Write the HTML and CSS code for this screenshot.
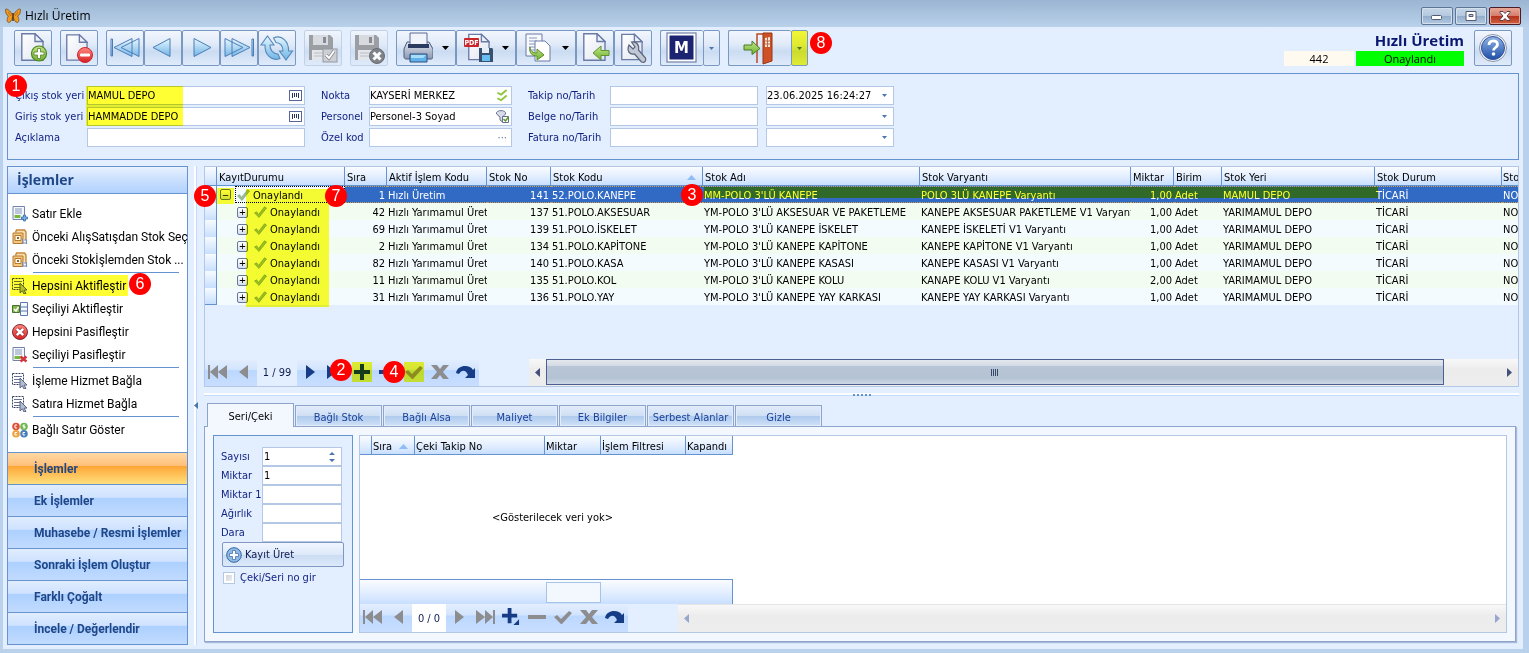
FILE: index.html
```html
<!DOCTYPE html>
<html lang="tr">
<head>
<meta charset="utf-8">
<title>Hızlı Üretim</title>
<link rel="stylesheet" href="styles.css">
</head>
<body>
<svg class="defs" aria-hidden="true">
  <defs>
    <linearGradient id="gBlue" x1="0" y1="0" x2="0" y2="1"><stop offset="0" stop-color="#e9f7fe"/><stop offset="1" stop-color="#6db4e6"/></linearGradient>
    <linearGradient id="gPage" x1="0" y1="0" x2="1" y2="1"><stop offset="0" stop-color="#ffffff"/><stop offset="1" stop-color="#dfe5f0"/></linearGradient>
    <linearGradient id="gGreen" x1="0" y1="0" x2="0" y2="1"><stop offset="0" stop-color="#c3e68c"/><stop offset="1" stop-color="#6fb02c"/></linearGradient>
    <linearGradient id="gRed" x1="0" y1="0" x2="0" y2="1"><stop offset="0" stop-color="#ff8a80"/><stop offset="1" stop-color="#d81e22"/></linearGradient>
    <linearGradient id="gHelp" x1="0" y1="0" x2="0" y2="1"><stop offset="0" stop-color="#8fb4e4"/><stop offset="1" stop-color="#1e4fa8"/></linearGradient>
    <linearGradient id="gSteel" x1="0" y1="0" x2="0" y2="1"><stop offset="0" stop-color="#dfe4ee"/><stop offset="1" stop-color="#8c98b0"/></linearGradient>
  </defs>
  <symbol id="page" viewBox="0 0 23 28"><path d="M.8 .8H14L22 8.500V27.200H.8Z" fill="url(#gPage)" stroke="#6a7ba8" stroke-width="1.400"/><path d="M14 .8V8.500H22Z" fill="#eef2f9" stroke="#6a7ba8" stroke-width="1.400"/></symbol>
  <symbol id="floppy" viewBox="0 0 24 25"><path d="M0 0H21L24 3V25H0Z" fill="#8f9194"/><path d="M4 0H19V10H4Z" fill="#d5d7da"/><path d="M14 2H17V8H14Z" fill="#77797d"/><path d="M3 15H21V25H3Z" fill="#e4e5e7"/><path d="M5 18H19M5 21H19" stroke="#b4b6b9"/></symbol>
  <symbol id="first" viewBox="0 0 20 16"><path d="M0 1h2v14H0zM10 1v14L2 8zM19 1v14L10 8z"/></symbol>
  <symbol id="last" viewBox="0 0 20 16"><path d="M18 1h2v14h-2zM10 1v14L18 8zM1 1v14L10 8z"/></symbol>
  <symbol id="prev" viewBox="0 0 10 16"><path d="M9 1v14L0 8z"/></symbol>
  <symbol id="next" viewBox="0 0 10 16"><path d="M1 1v14L10 8z"/></symbol>
  <symbol id="plus" viewBox="0 0 18 18"><path d="M7 1h4v6h6v4h-6v6H7v-6H1V7h6z"/></symbol>
  <symbol id="plusmenu" viewBox="0 0 19 19"><path d="M6 0h4v6h6v4h-6v6H6v-6H0V6h6zM18 12v6h-6z"/></symbol>
  <symbol id="minus" viewBox="0 0 18 18"><path d="M0 7h18v4H0z"/></symbol>
  <symbol id="tick" viewBox="0 0 18 18"><path d="M0 9l3-2 4 4L15 3l3 2L8 16H7z"/></symbol>
  <symbol id="cross" viewBox="0 0 18 18"><path d="M0 2h6l3 4 3-4h6l-6 7 6 7h-6l-3-4-3 4H0l6-7z"/></symbol>
  <symbol id="redo" viewBox="0 0 20 16"><path d="M0 9C1 4 5 2 9 2c4 0 6 1 8 4l2-2v10H9l3-3C10 6 6 5 3 10z"/></symbol>
  <symbol id="down" viewBox="0 0 7 4"><path d="M0 0h7L3.500 4z"/></symbol>
  <symbol id="rowtick" viewBox="0 0 13 12"><path d="M.6 7l2-1.200L4.600 8.500 10.500.8 12.500 2 5 11.400z" fill="#9cbf92" stroke="#7fa67c" stroke-width=".8"/></symbol>
  <symbol id="barcode" viewBox="0 0 13 11"><rect x=".5" y=".5" width="12" height="10" fill="#fff" stroke="#56659c"/><path d="M3.500 3v5M5.500 3v4M7.500 3v4M9.500 3v5" stroke="#26325e"/></symbol>
  <symbol id="select" viewBox="0 0 16 16"><path d="M.5 .5h11v11H.5z" fill="none" stroke="#333e66" stroke-dasharray="2 1"/><path d="M2 3.500h8M2 6.500h6M2 9.500h6" stroke="#687394"/><path d="M8 5l7 7-3 .2 2 3.200-2 .6-1.600-3.200L8 15z" fill="#b4bdd2" stroke="#4f5a78" stroke-width=".9"/></symbol>
  <symbol id="list" viewBox="0 0 16 16"><path d="M1 .5h11.500v13H1z" fill="#f4f7fc" stroke="#7383ab"/><path d="M3 3h7M3 5h7M3 7h7" stroke="#8796b8"/><path d="M2.500 9h6v3h-6z" fill="#78b83d"/></symbol>
  <symbol id="box" viewBox="0 0 16 16"><path d="M3.500 3.500l1-2.500h8l1.500 2v8" fill="#f8dfae" stroke="#c48a3c" stroke-width="1.400"/><path d="M1 4h10v10.500H1z" fill="#f3c77d" stroke="#b67a35"/><path d="M3 6.500h6v5H3z" fill="#fff7e5" stroke="#b67a35"/><path d="M5 8h2v2H5z" fill="#8a6536"/><path d="M10.500 9.500v4.500h4M12 11h2.500v4" fill="none" stroke="#7d8eae" stroke-width="1.200"/></symbol>
</svg>

<header class="titlebar">
  <svg class="ico16" viewBox="0 0 16 16"><path d="M7.500 7C5 2 1 0 .5 1.500c0 3 1 6 3 6.500C2 9.500 1.500 14 3.500 14.500 6 14.500 7 11 8 9c1 2 2 5.500 4.500 5.500C14.500 14 14 9.500 12.500 8c2-.5 3-3.500 3-6.500C15 0 11 2 8.500 7z" fill="#f09a24" stroke="#7a4c14" stroke-width=".8"/><path d="M8 5v8" stroke="#4c3010" stroke-width="1.400"/><path d="M3 4l3 4M13 4l-3 4" stroke="#b8640f" stroke-width=".8"/></svg>
  <h1>Hızlı Üretim</h1>
  <div class="winbtns">
    <button aria-label="Küçült"><svg viewBox="0 0 12 10"><rect x=".5" y="4.500" width="10" height="4" rx="1" fill="#fff" stroke="#555b6e"/></svg></button>
    <button aria-label="Büyüt"><svg viewBox="0 0 12 10"><path fill-rule="evenodd" d="M1 .5h10v9H1zM4 3.500v2h4v-2z" fill="#fff" stroke="#555b6e"/></svg></button>
    <button class="close" aria-label="Kapat"><svg viewBox="0 0 12 10"><path d="M1 .5h3l2 2 2-2h3v1L8 5l3 3.500v1H8l-2-2-2 2H1v-1L4 5 1 1.500z" fill="#fff" stroke="#5b3c46"/></svg></button>
  </div>
</header>

<div class="client">
  <div class="toolbar">
    <button class="tb" aria-label="Yeni"><svg viewBox="1 1 36 34"><use href="#page" x="7" y="3" width="23" height="28"/><circle cx="25" cy="23.500" r="7.500" fill="url(#gGreen)" stroke="#4c8420" stroke-width="1.200"/><path d="M23.500 18.500h3v3.500h3.500v3h-3.500v3.500h-3V25H20v-3h3.500z" fill="#fff" stroke="#58812f" stroke-width=".8"/></svg></button>
    <button class="tb" aria-label="Sil"><svg viewBox="1 1 36 34"><use href="#page" x="6" y="4" width="22" height="27"/><circle cx="25" cy="25" r="7.500" fill="url(#gRed)" stroke="#c9262c" stroke-width="1"/><rect x="20" y="23.500" width="10" height="3" rx="1" fill="#fff"/></svg></button>
    <div class="group">
      <button class="tb" aria-label="İlk"><svg viewBox="1 1 36 34"><path d="M5 9h1.500v17H5zM26 8.500v18L8 17.500zM33 8.500v18L15 17.500z" fill="url(#gBlue)" fill-opacity=".9" stroke="#4a7cb8"/></svg></button>
      <button class="tb" aria-label="Önceki"><svg viewBox="1 1 36 34"><path d="M26 8.500v18L9 17.500z" fill="url(#gBlue)" stroke="#4a7cb8"/></svg></button>
      <button class="tb" aria-label="Sonraki"><svg viewBox="1 1 36 34"><path d="M12 8.500v18L29 17.500z" fill="url(#gBlue)" stroke="#4a7cb8"/></svg></button>
      <button class="tb" aria-label="Son"><svg viewBox="1 1 36 34"><path d="M32 9h1.500v17H32zM5 8.500v18L23 17.500zM12 8.500v18L30 17.500z" fill="url(#gBlue)" fill-opacity=".9" stroke="#4a7cb8"/></svg></button>
      <button class="tb" aria-label="Yenile"><svg viewBox="1 1 36 34"><path d="M9.500 6l6.500 9h-4c0 5 3 9 8 9l2 4.500C13 32 6.500 24 7 15H3zM28 30l-6.500-9H25c0-5-3-8-7-8.500L15.500 8C24 4 31 12 30.500 21H34.500z" fill="url(#gBlue)" stroke="#5588bb" stroke-width="1.100"/></svg></button>
    </div>
    <button class="tb off" disabled aria-label="Kaydet"><svg viewBox="1 1 36 34"><use href="#floppy" x="5" y="5" width="24" height="25"/><rect x="19" y="19" width="14" height="13" fill="#c9cbcf" stroke="#888b91"/><path d="M22 25l3 3 5-7" fill="none" stroke="#777" stroke-width="3.500"/><path d="M22 25l3 3 5-7" fill="none" stroke="#fff" stroke-width="2"/></svg></button>
    <button class="tb off" disabled aria-label="Vazgeç"><svg viewBox="1 1 36 34"><use href="#floppy" x="5" y="5" width="24" height="25"/><circle cx="27" cy="26" r="7.500" fill="#6e7074" stroke="#55575b"/><path d="M23.500 22.500l7 7M30.500 22.500l-7 7" stroke="#fff" stroke-width="3"/></svg></button>
    <div class="group">
      <button class="tb wide" aria-label="Yazdır"><svg viewBox="1 1 36 34"><path d="M11 12h22l4 7v8c0 1-1 2-2 2H10c-1 0-2-1-2-2v-8z" fill="url(#gSteel)" stroke="#4a5b86"/><path d="M14 3h17v12H14z" fill="#f0f3f9" stroke="#5b6b96"/><path d="M12 14h21v4H12z" fill="#2b3a60"/><path d="M14 24h17v8H14z" fill="#62b2ea" stroke="#2f4d80"/><path d="M15 25h15l-3 3H15z" fill="#a9dcf8"/></svg><svg class="arr"><use href="#down"/></svg></button>
      <button class="tb wide" aria-label="PDF kaydet"><svg viewBox="1 1 36 34"><use href="#page" x="12" y="3" width="22" height="28"/><rect x="8" y="8" width="15" height="9" rx="1" fill="#c9262c"/><text x="15.500" y="15" class="pdf">PDF</text><path d="M23 18h13l1 1v13H23z" fill="#39506f"/><path d="M26 18h7v5h-7z" fill="#e5edf6"/><path d="M26 25h8v6h-8z" fill="#66bff0"/></svg><svg class="arr"><use href="#down"/></svg></button>
      <button class="tb wide" aria-label="Kopyala"><svg viewBox="1 1 36 34"><path d="M10 4h16v22H10z" fill="#f7f9fd" stroke="#6a7ba8"/><path d="M13 8h8M13 11h8M13 14h8M13 17h8M13 20h8" stroke="#8a97bb"/><path d="M19 11h10l5 5v15H19z" fill="#fff" stroke="#6a7ba8"/><path d="M14 17c0 4 3 6 7 6v-4l7 6-7 5v-4c-5 0-8-3-7-9z" fill="url(#gGreen)" stroke="#5a8f24"/></svg><svg class="arr"><use href="#down"/></svg></button>
      <button class="tb" aria-label="İçe aktar"><svg viewBox="1 1 36 34"><use href="#page" x="7" y="3" width="23" height="28"/><path d="M17 23l8-7v4.500h8v5h-8V30z" fill="url(#gGreen)" stroke="#5f9430"/></svg></button>
      <button class="tb" aria-label="Ayarlar"><svg viewBox="1 1 36 34"><use href="#page" x="7" y="3" width="22" height="28"/><path d="M15 15l4 4 2-2-3.500-5c5-1 8 3 7 8l7 8c1 3-1 5-4 4l-7-8c-5 1-8-3-5.500-9z" fill="#c1c7d3" stroke="#58637c" stroke-width="1.200"/></svg></button>
    </div>
    <div class="group">
      <button class="tb m" aria-label="Mikro"><svg viewBox="1 1 36 34"><rect x="4" y="3" width="29" height="29" fill="#fff" stroke="#7180a8" stroke-width="1.200"/><rect x="6.500" y="5.500" width="24" height="24" fill="#1c2472"/><text x="18.500" y="23" class="mlogo">M</text></svg></button>
      <button class="tb drop" aria-label="Mikro seçenekleri"><svg class="arr"><use href="#down"/></svg></button>
    </div>
    <div class="group">
      <button class="tb exit" aria-label="Çıkış"><svg viewBox="1 1 36 34"><path d="M16 33V4h6" fill="none" stroke="#bb4a28" stroke-width="1.500"/><path d="M22 3h9v28l-9 3z" fill="#cf5227" stroke="#983515"/><path d="M24 8l5-1v10h-5z" fill="#f7e8d8"/><path d="M24 11h5M24 14h5M26.500 7v10" stroke="#b66a45"/><path d="M3 15h8v-4l8 7.500-8 6V20H3z" fill="url(#gGreen)" stroke="#477c23"/></svg></button>
      <button class="tb drop" aria-label="Çıkış seçenekleri"><svg class="arr"><use href="#down"/></svg><span class="mark all"></span></button>
    </div>
    <span class="badge static">8</span>
    <div class="status">
      <strong>Hızlı Üretim</strong>
      <span class="no">442</span><span class="ok">Onaylandı</span>
    </div>
    <button class="tb help" aria-label="Yardım"><svg viewBox="1 1 36 34"><circle cx="19" cy="18" r="13.500" fill="#f3f6fb" stroke="#8a94ae"/><circle cx="19" cy="18" r="11.500" fill="url(#gHelp)" stroke="#34549a"/><path d="M15 15c0-5.500 8.500-5.500 8.500-.5 0 3-4 3-4 6" fill="none" stroke="#fff" stroke-width="2.800"/><circle cx="19.500" cy="24" r="1.800" fill="#fff"/></svg></button>
  </div>

  <section class="docform">
    <div class="fields f1">
      <label for="cikis">Çıkış stok yeri</label><div class="inp"><input id="cikis" value="MAMUL DEPO"><svg class="i13"><use href="#barcode"/></svg></div>
      <label for="giris">Giriş stok yeri</label><div class="inp"><input id="giris" value="HAMMADDE DEPO"><svg class="i13"><use href="#barcode"/></svg></div>
      <label for="acik">Açıklama</label><div class="inp"><input id="acik"></div>
      <span class="mark stores"></span>
    </div>
    <div class="fields f2">
      <label for="nokta">Nokta</label><div class="inp"><input id="nokta" value="KAYSERİ MERKEZ"><svg class="i13" viewBox="0 0 13 14"><path d="M1 4l4 2 6-5M1 10l4 2 6-5" fill="none" stroke="#8fc63e" stroke-width="2"/></svg></div>
      <label for="pers">Personel</label><div class="inp"><input id="pers" value="Personel-3 Soyad"><svg class="i13" viewBox="0 0 13 13"><path d="M.5 2.500C2 0 8 0 9.500 2.500V4L6.500 7v5L4 10V7L.5 4z" fill="#d7dce8" stroke="#65708e"/><path d="M6.500 6.500h6v6h-6z" fill="#fff" stroke="#65708e"/><path d="M7.500 9l2 2 3-4" fill="none" stroke="#559a25" stroke-width="1.400"/></svg></div>
      <label for="ozel">Özel kod</label><div class="inp"><input id="ozel"><span class="dots">···</span></div>
    </div>
    <div class="fields f3">
      <label for="takip">Takip no/Tarih</label><div class="inp"><input id="takip"></div><div class="inp"><select aria-label="Takip tarihi"><option>23.06.2025 16:24:27</option></select><svg class="arr"><use href="#down"/></svg></div>
      <label for="belge">Belge no/Tarih</label><div class="inp"><input id="belge"></div><div class="inp"><select aria-label="Belge tarihi"><option></option></select><svg class="arr"><use href="#down"/></svg></div>
      <label for="fatura">Fatura no/Tarih</label><div class="inp"><input id="fatura"></div><div class="inp"><select aria-label="Fatura tarihi"><option></option></select><svg class="arr"><use href="#down"/></svg></div>
    </div>
    <span class="badge b1">1</span>
  </section>

  <div class="main">
    <aside class="sidebar">
      <h2>İşlemler</h2>
      <div class="acts">
        <button><svg class="ico16" viewBox="0 0 16 16"><use href="#list"/><path d="M9.500 9.500h2v-2h2v2h2v2h-2v2h-2v-2h-2z" fill="#78b0e4" stroke="#3569a8" stroke-width=".8" transform="translate(0 1.500)"/></svg>Satır Ekle</button>
        <button><svg class="ico16"><use href="#box"/></svg>Önceki AlışSatışdan Stok Seç</button>
        <button><svg class="ico16"><use href="#box"/></svg>Önceki Stokİşlemden Stok ...</button>
        <hr>
        <button><svg class="ico16"><use href="#select"/></svg>Hepsini Aktifleştir<span class="mark act"></span><span class="badge b6">6</span></button>
        <button><svg class="ico16" viewBox="0 0 16 16"><path d="M8.500 1.500h7v13h-7zM8.500 6h7M8.500 10h7" fill="#f4f8ff" stroke="#6079ad"/><path d="M.5 4.500h7v7h-7z" fill="#86b94c" stroke="#4a7030"/><path d="M2 8l2 2 2.500-4" fill="none" stroke="#fff" stroke-width="1.500"/></svg>Seçiliyi Aktifleştir</button>
        <button><svg class="ico16" viewBox="0 0 16 16"><circle cx="8" cy="8" r="7.500" fill="url(#gRed)" stroke="#7d2a33"/><path d="M4.800 4.800l6.400 6.400M11.200 4.800l-6.400 6.400" stroke="#8d2c35" stroke-width="4"/><path d="M4.800 4.800l6.400 6.400M11.200 4.800l-6.400 6.400" stroke="#fff" stroke-width="2.600"/></svg>Hepsini Pasifleştir</button>
        <button><svg class="ico16" viewBox="0 0 16 16"><use href="#list"/><path d="M8.500 9.500l6 5M14.500 9.500l-6 5" stroke="#d3353a" stroke-width="2.500"/></svg>Seçiliyi Pasifleştir</button>
        <hr>
        <button><svg class="ico16"><use href="#select"/></svg>İşleme Hizmet Bağla</button>
        <button><svg class="ico16"><use href="#select"/></svg>Satıra Hizmet Bağla</button>
        <hr>
        <button><svg class="ico16" viewBox="0 0 16 16"><circle cx="4" cy="4.500" r="3.800" fill="#df5238"/><circle cx="12" cy="4.500" r="3.800" fill="#71b850"/><circle cx="4" cy="11.800" r="3.800" fill="#eda33f"/><circle cx="12" cy="11.800" r="3.800" fill="#4b80bd"/><path d="M5 3H3v3h2M13 3h-2v1.500h2V6h-2M5 10.500H3v2.500h2M13 10.500h-2v2.500h2" fill="none" stroke="#fff"/></svg>Bağlı Satır Göster</button>
      </div>
      <nav>
        <button class="on">İşlemler</button>
        <button>Ek İşlemler</button>
        <button>Muhasebe / Resmi İşlemler</button>
        <button>Sonraki İşlem Oluştur</button>
        <button>Farklı Çoğalt</button>
        <button>İncele / Değerlendir</button>
      </nav>
    </aside>
    <div class="vsplit"><svg viewBox="0 0 4 7"><path d="M4 0v7L0 3.500z"/></svg></div>

    <div class="right">
      <section class="grid">
        <div class="clip">
        <table>
          <colgroup><col class="c12"><col class="c128"><col class="c42"><col class="c100"><col class="c64"><col class="c152"><col class="c217"><col class="c211"><col class="c43"><col class="c48"><col class="c153"><col class="c127"><col></colgroup>
          <thead><tr><th></th><th>KayıtDurumu</th><th>Sıra</th><th>Aktif İşlem Kodu</th><th>Stok No</th><th><span class="sort">Stok Kodu<svg viewBox="0 0 9 5"><path d="M0 5h9L4.500 0z"/></svg></span></th><th>Stok Adı</th><th>Stok Varyantı</th><th>Miktar</th><th>Birim</th><th>Stok Yeri</th><th>Stok Durum</th><th>Sto</th></tr></thead>
          <tbody>
          <tr class="sel"><td></td><td><span class="node"><button class="ex" aria-label="Daralt">−</button><span class="foc"><svg class="rt"><use href="#rowtick"/></svg>Onaylandı</span></span></td><td class="n">1</td><td>Hızlı Üretim</td><td class="n">141</td><td>52.POLO.KANEPE</td><td>MM-POLO 3'LÜ KANEPE</td><td>POLO 3LÜ KANEPE Varyantı</td><td class="n">1,00</td><td>Adet</td><td>MAMUL DEPO</td><td>TİCARİ</td><td>NO</td></tr>
          <tr><td></td><td><span class="node kid"><button class="ex" aria-label="Genişlet">+</button><svg class="rt"><use href="#rowtick"/></svg>Onaylandı</span></td><td class="n">42</td><td>Hızlı Yarımamul Üretim</td><td class="n">137</td><td>51.POLO.AKSESUAR</td><td>YM-POLO 3'LÜ AKSESUAR VE PAKETLEME</td><td>KANEPE AKSESUAR PAKETLEME V1 Varyant</td><td class="n">1,00</td><td>Adet</td><td>YARIMAMUL DEPO</td><td>TİCARİ</td><td>NO</td></tr>
          <tr><td></td><td><span class="node kid"><button class="ex" aria-label="Genişlet">+</button><svg class="rt"><use href="#rowtick"/></svg>Onaylandı</span></td><td class="n">69</td><td>Hızlı Yarımamul Üretim</td><td class="n">139</td><td>51.POLO.İSKELET</td><td>YM-POLO 3'LÜ KANEPE İSKELET</td><td>KANEPE İSKELETİ V1 Varyantı</td><td class="n">1,00</td><td>Adet</td><td>YARIMAMUL DEPO</td><td>TİCARİ</td><td>NO</td></tr>
          <tr><td></td><td><span class="node kid"><button class="ex" aria-label="Genişlet">+</button><svg class="rt"><use href="#rowtick"/></svg>Onaylandı</span></td><td class="n">2</td><td>Hızlı Yarımamul Üretim</td><td class="n">134</td><td>51.POLO.KAPİTONE</td><td>YM-POLO 3'LÜ KANEPE KAPİTONE</td><td>KANEPE KAPİTONE V1 Varyantı</td><td class="n">1,00</td><td>Adet</td><td>YARIMAMUL DEPO</td><td>TİCARİ</td><td>NO</td></tr>
          <tr><td></td><td><span class="node kid"><button class="ex" aria-label="Genişlet">+</button><svg class="rt"><use href="#rowtick"/></svg>Onaylandı</span></td><td class="n">82</td><td>Hızlı Yarımamul Üretim</td><td class="n">140</td><td>51.POLO.KASA</td><td>YM-POLO 3'LÜ KANEPE KASASI</td><td>KANEPE KASASI V1 Varyantı</td><td class="n">1,00</td><td>Adet</td><td>YARIMAMUL DEPO</td><td>TİCARİ</td><td>NO</td></tr>
          <tr><td></td><td><span class="node kid"><button class="ex" aria-label="Genişlet">+</button><svg class="rt"><use href="#rowtick"/></svg>Onaylandı</span></td><td class="n">11</td><td>Hızlı Yarımamul Üretim</td><td class="n">135</td><td>51.POLO.KOL</td><td>YM-POLO 3'LÜ KANEPE KOLU</td><td>KANAPE KOLU V1 Varyantı</td><td class="n">2,00</td><td>Adet</td><td>YARIMAMUL DEPO</td><td>TİCARİ</td><td>NO</td></tr>
          <tr><td></td><td><span class="node kid"><button class="ex" aria-label="Genişlet">+</button><svg class="rt"><use href="#rowtick"/></svg>Onaylandı</span></td><td class="n">31</td><td>Hızlı Yarımamul Üretim</td><td class="n">136</td><td>51.POLO.YAY</td><td>YM-POLO 3'LÜ KANEPE YAY KARKASI</td><td>KANEPE YAY KARKASI Varyantı</td><td class="n">1,00</td><td>Adet</td><td>YARIMAMUL DEPO</td><td>TİCARİ</td><td>NO</td></tr>
          </tbody>
        </table>
        </div>
        <span class="mark kids"></span><span class="mark expander"></span><span class="mark rowmark"></span>
        <span class="badge b5">5</span><span class="badge b7">7</span><span class="badge b3">3</span>
        <div class="foot">
          <div class="navi">
            <button class="dim" aria-label="İlk kayıt"><svg class="w20"><use href="#first"/></svg></button>
            <button class="dim" aria-label="Önceki kayıt"><svg class="w10"><use href="#prev"/></svg></button>
            <span class="pos">1 / 99</span>
            <button aria-label="Sonraki kayıt"><svg class="w10"><use href="#next"/></svg></button>
            <button aria-label="Son kayıt"><svg class="w20"><use href="#last"/></svg></button>
            <button aria-label="Ekle"><svg class="w18"><use href="#plus"/></svg><span class="mark tool"></span><span class="badge b2">2</span></button>
            <button aria-label="Çıkar"><svg class="w18"><use href="#minus"/></svg></button>
            <button class="dim" aria-label="Onayla"><svg class="w18"><use href="#tick"/></svg><span class="mark tool"></span><span class="badge b4">4</span></button>
            <button class="dim" aria-label="İptal"><svg class="w18"><use href="#cross"/></svg></button>
            <button aria-label="Yenile"><svg class="w20"><use href="#redo"/></svg></button>
          </div>
          <div class="scroll">
            <button aria-label="Sola kaydır"><svg class="w5" viewBox="0 0 5 9"><path d="M5 0v9L0 4.500z"/></svg></button>
            <div class="track"><div class="thumb"><i></i><i></i><i></i><i></i></div></div>
            <button aria-label="Sağa kaydır"><svg class="w5" viewBox="0 0 5 9"><path d="M0 0v9L5 4.500z"/></svg></button>
          </div>
        </div>
      </section>
      <div class="hsplit"><i></i><i></i><i></i><i></i><i></i></div>

      <div class="tabs">
        <button class="on">Seri/Çeki</button><button>Bağlı Stok</button><button>Bağlı Alsa</button><button>Maliyet</button><button>Ek Bilgiler</button><button>Serbest Alanlar</button><button>Gizle</button>
      </div>
      <section class="tabpanel">
        <form class="serial">
          <div class="pairs">
            <label for="sayisi">Sayısı</label><div class="inp"><input id="sayisi" value="1"><svg class="spin" viewBox="0 0 6 10"><path d="M0 3h6L3 0zM0 7h6L3 10z"/></svg></div>
            <label for="mik">Miktar</label><div class="inp"><input id="mik" value="1"></div>
            <label for="mik1">Miktar 1</label><div class="inp"><input id="mik1"></div>
            <label for="agir">Ağırlık</label><div class="inp"><input id="agir"></div>
            <label for="dara">Dara</label><div class="inp"><input id="dara"></div>
          </div>
          <button type="button" class="make"><svg class="ico16" viewBox="0 0 16 16"><circle cx="8" cy="8" r="7.300" fill="#8fbbe6" stroke="#34669f"/><path d="M6.500 3.500h3v3h3v3h-3v3h-3v-3h-3v-3h3z" fill="#fff" stroke="#4274ab" stroke-width=".8"/></svg>Kayıt Üret</button>
          <label class="chk"><input type="checkbox">Çeki/Seri no gir</label>
        </form>
        <div class="subgrid">
          <div class="subbody">
            <table>
              <colgroup><col class="c12"><col class="c43"><col class="c130"><col class="c56"><col class="c85"><col class="c47"></colgroup>
              <thead><tr><th></th><th><span class="sort">Sıra<svg viewBox="0 0 9 5"><path d="M0 5h9L4.500 0z"/></svg></span></th><th>Çeki Takip No</th><th>Miktar</th><th>İşlem Filtresi</th><th>Kapandı</th></tr></thead>
            </table>
            <div class="empty">&lt;Gösterilecek veri yok&gt;</div>
            <div class="sum"><span></span></div>
          </div>
          <div class="foot">
            <div class="navi">
              <button class="dim" aria-label="İlk"><svg class="w20"><use href="#first"/></svg></button>
              <button class="dim" aria-label="Önceki"><svg class="w10"><use href="#prev"/></svg></button>
              <span class="pos">0 / 0</span>
              <button class="dim" aria-label="Sonraki"><svg class="w10"><use href="#next"/></svg></button>
              <button class="dim" aria-label="Son"><svg class="w20"><use href="#last"/></svg></button>
              <button aria-label="Ekle"><svg class="w18"><use href="#plusmenu"/></svg></button>
              <button class="dim" aria-label="Çıkar"><svg class="w18"><use href="#minus"/></svg></button>
              <button class="dim" aria-label="Onayla"><svg class="w18"><use href="#tick"/></svg></button>
              <button class="dim" aria-label="İptal"><svg class="w18"><use href="#cross"/></svg></button>
              <button aria-label="Yenile"><svg class="w20"><use href="#redo"/></svg></button>
            </div>
            <div class="scroll idle">
              <button aria-label="Sola"><svg class="w5" viewBox="0 0 5 9"><path d="M5 0v9L0 4.500z"/></svg></button>
              <div class="track"></div>
              <button aria-label="Sağa"><svg class="w5" viewBox="0 0 5 9"><path d="M0 0v9L5 4.500z"/></svg></button>
            </div>
          </div>
        </div>
      </section>
    </div>
  </div>
</div>
</body>
</html>
```
FILE: styles.css
```css
:root {
  --ui: "DejaVu Sans Condensed", "DejaVu Sans", sans-serif;
  --segoe: "Open Sans", "Noto Sans", sans-serif;
  --side: Roboto, "Noto Sans", sans-serif;
  --line: #6593cf;
  --soft: #b4c8e6;
  --bg: #e3eefe;
  --navy: #0f1f80;
}
* { box-sizing: border-box; }
body {
  margin: 0;
  min-height: 100vh;
  display: flex;
  flex-direction: column;
  padding: 0 6px 4px 3px;
  background: linear-gradient(#9bb5d2, #b9d1ea 27px, #b9d1ea);
  font: 11px/13px var(--ui);
  color: #000;
  overflow: hidden;
}
button, input, select { font: inherit; color: inherit; margin: 0; padding: 0; border: 0; border-radius: 0; background: none; outline: 0; }
h1, h2 { margin: 0; font-weight: 400; }
svg { display: block; flex: none; }
.defs { position: absolute; width: 0; height: 0; }
.ico16 { width: 16px; height: 16px; }
.arr { width: 7px; height: 4px; }
.w20 { width: 20px; height: 16px; }
.w18 { width: 18px; height: 18px; }
.w10 { width: 10px; height: 16px; }
.w5 { width: 5px; height: 9px; }

/* title bar */
.titlebar { height: 27px; display: flex; align-items: center; padding: 4px 2px 0 2px; gap: 4px; }
.titlebar h1 { font: 12px/16px var(--segoe); flex: 1; }
.winbtns { display: flex; gap: 2px; }
.winbtns button { width: 32px; height: 18px; display: grid; place-items: center; border: 1px solid #5f7594; border-radius: 2px; background: linear-gradient(#c6d6e8, #b3c8df 50%, #92acca 50%, #b2c9e2); box-shadow: inset 0 0 0 1px #d3e1ef; }
.winbtns svg { width: 12px; height: 10px; }
.winbtns .close { border-color: #4b1b28; background: linear-gradient(#e8a798, #d47c6b 50%, #b5301b 50%, #d0603f); box-shadow: inset 0 0 0 1px #e4a595; }

.client { flex: 1; display: flex; flex-direction: column; background: var(--bg); padding: 0 4px 4px; }

/* toolbar */
.toolbar { display: flex; align-items: flex-start; gap: 8px; padding: 3px 7px 7px; }
.group { display: flex; }
.tb { position: relative; width: 38px; height: 36px; display: flex; align-items: center; border: 1px solid #7a99c2; border-radius: 2px; background: linear-gradient(#f2f6fd, #e0eaf8 40%, #cbdcf2 60%, #dfebfa); }
.tb > svg:first-child:not(.arr) { width: 36px; height: 34px; }
.tb.wide { width: 60px; }
.tb .arr { margin-left: 9px; fill: #000; }
.tb.off { border-color: #bccce2; opacity: .85; }
.tb.m { width: 43px; padding-left: 3px; border-right: 0; }
.tb.drop { width: 17px; justify-content: center; }
.tb.drop .arr { margin: 0; width: 5px; height: 3px; fill: #4a76b0; }
.tb.exit { width: 63px; padding-left: 13px; border-right: 0; }
.pdf { font: bold 7px "DejaVu Sans Condensed", sans-serif; fill: #fff; text-anchor: middle; }
.mlogo { font: bold 15px "DejaVu Sans", sans-serif; fill: #fff; text-anchor: middle; }
.status { margin-left: auto; display: grid; grid-template-columns: 70px 108px; gap: 0 2px; text-align: center; font: 11px/15px var(--segoe); }
.status strong { grid-column: 1 / 3; text-align: right; font: bold 15px/21px var(--segoe); color: #0a1670; }
.no { background: #fffaf0; }
.ok { background: #0f0; }
.help { margin-left: 2px; }

/* callouts */
.badge { position: absolute; z-index: 3; width: 22px; height: 22px; border-radius: 50%; background: #f00; color: #fff; font: 16px/22px "Liberation Sans", Arial, sans-serif; text-align: center; pointer-events: none; }
.badge.static { position: static; margin: 2px 0 0 -6px; }
.mark { position: absolute; z-index: 2; background: #ffff33; mix-blend-mode: multiply; pointer-events: none; }
.mark.all { inset: 0; }
.mark.tool { inset: 0 3px; }
.b1 { left: -3px; top: 1px; }
.stores { left: 71px; top: 0; width: 97px; height: 40px; }
.act { left: 0; top: 1px; width: 118px; height: 21px; }
.b6 { left: 119px; top: -1px; }
.kids { left: 41px; top: 22px; width: 83px; height: 118px; }
.expander { left: 12px; top: 21px; width: 17px; height: 16px; }
.rowmark { left: 499px; top: 20px; width: 674px; height: 11px; }
.b5 { left: -11px; top: 18px; }
.b7 { left: 120px; top: 18px; }
.b3 { left: 476px; top: 17px; }
.b2 { left: -19px; top: -3px; }
.b4 { left: -18px; top: -1px; }

/* document fields */
.docform { position: relative; display: flex; gap: 16px; border: 1px solid var(--line); padding: 12px 7px; }
.fields { position: relative; display: grid; grid-auto-rows: 19px; gap: 2px 0; align-items: center; color: var(--navy); }
.f1 { grid-template-columns: 72px 218px; }
.f2 { grid-template-columns: 48px 143px; }
.f3 { grid-template-columns: 82px 148px 128px; }
.f3 .inp:nth-of-type(even) { margin-left: 8px; margin-right: -8px; }
.inp { height: 19px; display: flex; align-items: center; background: #fff; border: 1px solid var(--soft); color: #000; padding-right: 2px; min-width: 0; }
.inp input, .inp select { flex: 1; min-width: 0; width: 0; height: 17px; appearance: none; }
.inp .arr { width: 5px; height: 3px; fill: #4a76b0; margin-right: 4px; }
.i13 { width: 13px; height: 13px; }
.dots { color: #5a6f9c; padding-right: 2px; }

/* main */
.main { flex: 1; display: flex; padding-top: 6px; min-height: 0; }
.sidebar { width: 181px; flex: none; display: flex; flex-direction: column; border: 1px solid var(--line); background: #fff; font: 12px/16px var(--side); }
.sidebar h2 { height: 27px; padding-left: 9px; font: bold 14px/26px var(--segoe); color: #1f4788; border-bottom: 1px solid var(--line); background: linear-gradient(#e8f2ff, #c9dffd 50%, #b2d2ff); }
.acts { flex: 1; padding: 8px 0 0 2px; }
.acts button { position: relative; display: flex; align-items: center; gap: 4px; height: 23px; width: 100%; padding-left: 2px; white-space: nowrap; text-align: left; }
.acts hr { margin: 1px 8px 1px 23px; border: 0; height: 1px; background: var(--line); }
.sidebar nav button { display: block; width: 100%; height: 32px; border-top: 1px solid var(--line); padding-left: 26px; text-align: left; white-space: nowrap; font-weight: 700; color: #1f4788; background: linear-gradient(#e0edff, #cfe2ff 40%, #acd0ff 42%, #c2dbff); }
.sidebar nav .on { background: linear-gradient(#ffd8a4, #ffc078 42%, #fea737 43%, #ffdf7d); }
.vsplit { width: 16px; flex: none; display: flex; align-items: center; justify-content: center; background: linear-gradient(90deg, transparent 6px, #fff 6px, #fff 8px, #c2dbff 8px, #c2dbff 9px, transparent 9px); }
.vsplit svg { width: 4px; height: 7px; fill: #4a76b0; }
.right { flex: 1; min-width: 0; display: flex; flex-direction: column; }

/* grids */
table { border-collapse: separate; border-spacing: 0; table-layout: fixed; }
th { height: 19px; padding: 2px 0 0 2px; font-weight: 400; text-align: left; overflow: hidden; white-space: nowrap; border-right: 1px solid var(--line); border-bottom: 1px solid var(--line); background: linear-gradient(#fafcff, #dfecff 60%, #c8dfff); }
td { height: 17px; padding: 2px 0 0 1px; overflow: hidden; white-space: nowrap; }
.sort { display: flex; align-items: center; justify-content: space-between; padding-right: 6px; }
.sort svg { width: 9px; height: 5px; fill: #8ebcf5; }
.c12 { width: 12px; } .c42 { width: 42px; } .c43 { width: 43px; } .c47 { width: 47px; } .c48 { width: 48px; }
.c56 { width: 56px; } .c64 { width: 64px; } .c85 { width: 85px; } .c100 { width: 100px; } .c127 { width: 127px; }
.c128 { width: 128px; } .c130 { width: 130px; } .c152 { width: 152px; } .c153 { width: 153px; } .c211 { width: 211px; } .c217 { width: 217px; }
.grid { position: relative; height: 221px; display: flex; flex-direction: column; border: 1px solid var(--soft); }
.clip { flex: 1; overflow: hidden; }
.grid table { width: 100%; }
.grid th:last-child { border-right: 0; padding-left: 1px; }
.grid tbody tr { background: #f4fbff; }
.grid tbody tr:nth-child(even) { background: #f3fcf1; }
.grid tbody td:first-child { border-right: 1px solid var(--line); background: linear-gradient(#f7fbff, #c8dfff); }
.grid tbody td:nth-child(2) { padding: 0; }
.grid tbody tr:last-child td:first-child { border-bottom: 1px solid var(--line); }
.grid tbody .sel { background: #316ac5; color: #fff; }
.sel td:not(:first-child) { border-top: 1px dotted #d0a050; border-bottom: 1px dotted #d0a050; }
.grid .sel td:nth-child(n+3) { padding-top: 1px; }
.grid .sel td:nth-child(2) { background: #f4fbff; color: #000; border: 0; }
.grid td.n { text-align: right; padding-right: 2px; }
.node { display: flex; align-items: center; height: 17px; padding-left: 3px; gap: 4px; }
.kid { padding: 1px 0 0 20px; gap: 6px; }
.ex { width: 11px; height: 11px; border: 1px solid #6478a0; border-radius: 2px; background: linear-gradient(#fff, #d4deee); font: 11px/8px "Liberation Sans", sans-serif; text-align: center; overflow: hidden; }
.rt { width: 13px; height: 12px; }
.kid .rt { margin-right: -3px; }
.foc { flex: 1; height: 17px; display: flex; align-items: center; gap: 3px; padding: 1px 0 0 1px; border: 1px dotted #000; }
.foot { display: flex; justify-content: space-between; height: 27px; }
.navi { display: flex; align-items: center; color: #153c85; background: linear-gradient(#e3eefe, #d2e4fe 40%, #bcd8ff 42%, #c8deff); padding-bottom: 2px; flex: none; height: 27px; }
.navi button { position: relative; display: grid; place-items: center; width: 26px; height: 20px; fill: #153c85; }
.navi .dim { fill: #8d8d8f; }
.navi .pos { align-self: stretch; display: grid; place-items: center; width: 40px; background: var(--bg); margin-bottom: -2px; color: #0e1d4f; }
.scroll { display: flex; flex: 1; max-width: 989px; background: linear-gradient(#f8f8f8, #ececec 40%, #ededed); }
.scroll button { width: 17px; display: grid; place-items: center; fill: #44507c; }
.track { flex: 1; }
.thumb { width: 94%; height: 26px; display: flex; align-items: center; justify-content: center; gap: 1px; border: 1px solid #4d5f92; background: linear-gradient(#e4e8ee, #d3dae4 24%, #b8c5d6 26%, #b4c3d4 75%, #ccd8e4); }
.thumb i { width: 1px; height: 7px; background: #3c4a6a; }
.hsplit { height: 16px; display: flex; justify-content: center; gap: 2px; padding-top: 7px; background: linear-gradient(transparent 6px, #fff 6px, #fff 8px, #c2dbff 8px, #c2dbff 9px, transparent 9px); }
.hsplit i { width: 2px; height: 2px; background: #6593cf; }

/* tabs */
.tabs { display: flex; align-items: flex-end; gap: 1px; padding-left: 3px; height: 24px; margin-bottom: -1px; position: relative; }
.tabs button { width: 87px; height: 22px; padding-top: 2px; border: 1px solid #8ea4cc; box-shadow: inset 0 0 0 1px #e4eefb; background: linear-gradient(#e2ecfa, #cfdff4 50%, #b0cbee 52%, #cfe1f7); color: #1c429a; white-space: nowrap; }
.tabs .on { height: 24px; color: #000; background: #f3f8ff; border-bottom: 0; box-shadow: none; }
.tabpanel { flex: 1; display: flex; gap: 6px; padding: 8px; margin: 0 3px 3px 0; border: 1px solid #8ea4cc; box-shadow: 1px 1px 1px #a8b8d8; background: #f3f8ff; }
.serial { width: 140px; flex: none; border: 1px solid var(--line); background: var(--bg); padding: 11px 7px; color: var(--navy); }
.pairs { display: grid; grid-template-columns: 41px 80px; grid-auto-rows: 19px; align-items: center; }
.pairs .inp input { padding-left: 1px; }
.spin { width: 6px; height: 10px; fill: #4a76b0; margin-right: 4px; }
.make { display: flex; align-items: center; gap: 3px; width: 122px; height: 25px; margin-left: 1px; padding-left: 3px; border: 1px solid #7f98c4; border-radius: 2px; background: linear-gradient(#f0f6ff, #dde9f9 50%, #cbdcf2 52%, #dce9fa); color: #0a1850; }
.chk { display: flex; align-items: center; gap: 5px; margin-top: 4px; padding-left: 2px; }
.chk input { appearance: none; width: 12px; height: 12px; border: 1px solid var(--soft); background: linear-gradient(135deg, #c9cdd6, #f5f5f5); box-shadow: inset 0 0 0 2px #fff; }
.subgrid { flex: 1; min-width: 0; display: flex; flex-direction: column; border: 1px solid var(--soft); background: #fff; }
.subbody { width: 373px; flex: 1; display: flex; flex-direction: column; }
.subgrid th { padding-left: 1px; }
.empty { flex: 1; display: grid; place-items: center; padding-left: 12px; }
.sum { height: 25px; padding: 2px 0 0 186px; border-top: 1px solid var(--line); border-right: 1px solid var(--line); background: linear-gradient(#fafcff, #dfecff 60%, #c8dfff); }
.sum span { display: block; width: 55px; height: 21px; border: 1px solid #a6c3ec; background: #f3f8ff; }
.subgrid .foot { height: 28px; background: var(--bg); }
.subgrid .navi { height: 28px; }
.subgrid .pos { background: #fff; width: 34px; }
.scroll.idle { max-width: 828px; border-top: 1px solid #e4e4e4; }
.idle button { fill: #98a6cc; }
```
